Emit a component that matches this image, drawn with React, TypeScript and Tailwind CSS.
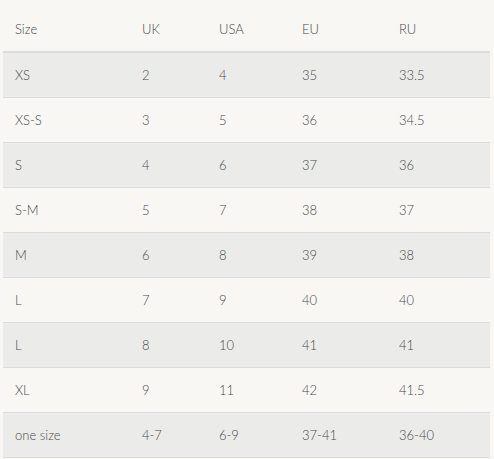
const header = ["Size", "UK", "USA", "EU", "RU"];
const rows = [
  ["XS", "2", "4", "35", "33.5"],
  ["XS-S", "3", "5", "36", "34.5"],
  ["S", "4", "6", "37", "36"],
  ["S-M", "5", "7", "38", "37"],
  ["M", "6", "8", "39", "38"],
  ["L", "7", "9", "40", "40"],
  ["L", "8", "10", "41", "41"],
  ["XL", "9", "11", "42", "41.5"],
  ["one size", "4-7", "6-9", "37-41", "36-40"],
];
const cols = ["w-[127px]", "w-[77px]", "w-[83px]", "w-[97px]", "w-[103px]"];

export default function App() {
  return (
    <div className="w-[494px] h-[459px] bg-[#f8f7f4] pt-[2px] pl-[3px] pr-[4px] text-[13px] text-[#4a4a4a] font-light font-['Lato',sans-serif]">
      <div className="flex h-[51px] items-center border-b-2 border-[#dcdcdc]">
        {header.map((h, i) => (
          <div key={i} className={`${cols[i]} pl-[12px] pt-[6px]`}>{h}</div>
        ))}
      </div>
      {rows.map((r, ri) => (
        <div
          key={ri}
          className={`flex h-[45px] items-center border-b border-[#dcdcdc] ${ri % 2 === 0 ? "bg-[#ebebea]" : "bg-[#f8f7f4]"}`}
        >
          {r.map((c, i) => (
            <div key={i} className={`${cols[i]} pl-[12px] pt-[2px]`}>{c}</div>
          ))}
        </div>
      ))}
    </div>
  );
}
